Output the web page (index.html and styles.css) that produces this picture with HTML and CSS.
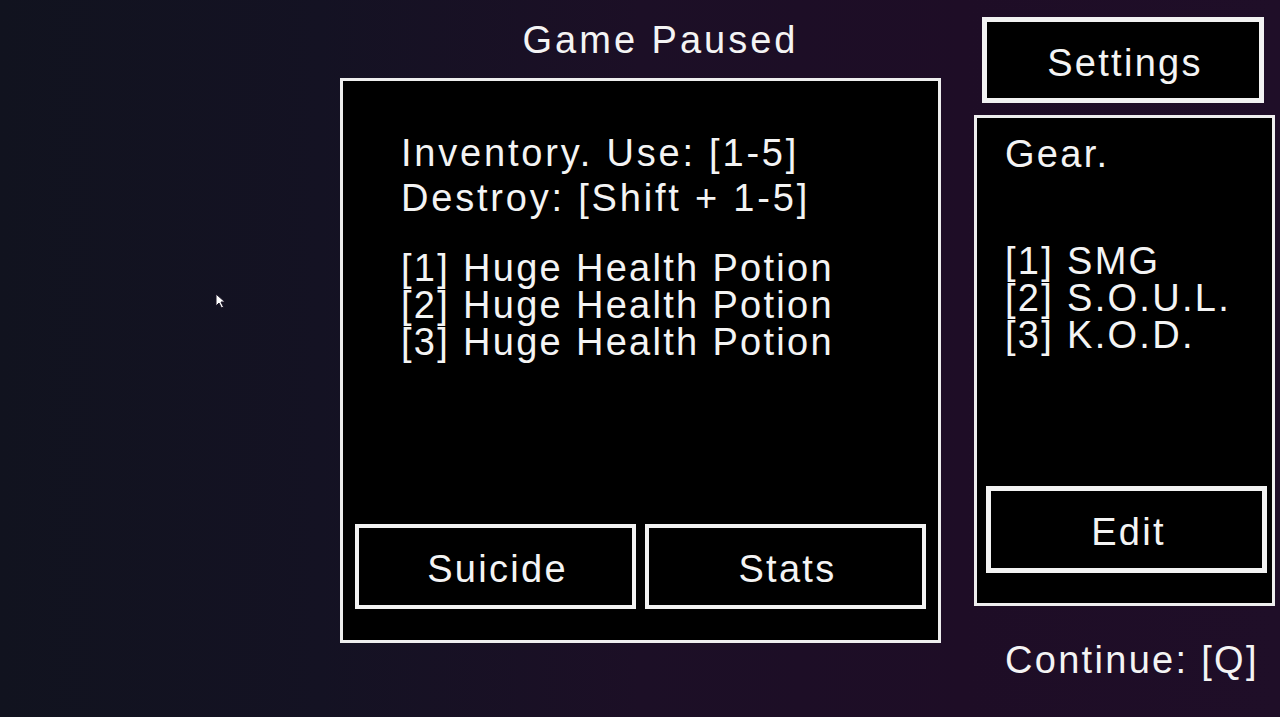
FILE: index.html
```html
<!DOCTYPE html>
<html lang="en">
<head>
    <meta charset="UTF-8">
    <meta name="viewport" content="width=device-width, initial-scale=1.0">
    <title>Game Paused</title>
    <link rel="stylesheet" href="styles.css">
</head>
<body>
    <div class="screen">
        <!-- Pause menu: inventory column -->
        <div class="center-col">
            <h1 class="title">Game Paused</h1>
            <div class="panel inventory">
                <div class="help">
                    <div>Inventory. Use: [1-5]</div>
                    <div>Destroy: [Shift + 1-5]</div>
                </div>
                <ul class="slots">
                    <li>[1] Huge Health Potion</li>
                    <li>[2] Huge Health Potion</li>
                    <li>[3] Huge Health Potion</li>
                </ul>
                <div class="button-row">
                    <button type="button" class="box-btn" id="suicide">Suicide</button>
                    <button type="button" class="box-btn" id="stats">Stats</button>
                </div>
            </div>
        </div>

        <!-- Settings + gear column -->
        <div class="side-col">
            <button type="button" class="box-btn settings" id="settings">Settings</button>
            <div class="panel gear">
                <div class="gear-title">Gear.</div>
                <ul class="slots gear-slots">
                    <li>[1] SMG</li>
                    <li>[2] S.O.U.L.</li>
                    <li>[3] K.O.D.</li>
                </ul>
                <button type="button" class="box-btn edit" id="edit">Edit</button>
            </div>
            <div class="continue">Continue: [Q]</div>
        </div>
    </div>

    <!-- Mouse pointer -->
    <svg class="pointer" width="12" height="16" viewBox="0 0 12 16">
        <path d="M1 1 L1 13 L4 10 L6.5 15 L8.5 14 L6 9 L10 9 Z" fill="#ffffff" stroke="#1a1526" stroke-width="1"/>
    </svg>
</body>
</html>
```

FILE: styles.css
```css
/* Page */
body {
    margin: 0;
    padding: 0;
    width: 1280px;
    height: 717px;
    overflow: hidden;
    position: relative;
    font-family: 'Liberation Sans', Arial, sans-serif;
    font-size: 38px;
    letter-spacing: 2.3px;
    color: #f4f4f4;
    background: linear-gradient(90deg, #11131f 0%, #141223 25%, #1c0f26 50%, #1e0d26 75%, #1f0e28 100%);
}

.screen {
    display: flex;
    padding-left: 340px;
    gap: 33px;
    height: 717px;
}

/* Center column */
.center-col {
    width: 601px;
    display: flex;
    flex-direction: column;
}

.title {
    margin: 0;
    height: 78px;
    box-sizing: border-box;
    padding: 17px 0 0 40px;
    text-align: center;
    font-size: 38px;
    font-weight: normal;
    letter-spacing: 3px;
    line-height: 46px;
}

.panel {
    background-color: #000;
    border: 3px solid #eeeeee;
    box-sizing: border-box;
    display: flex;
    flex-direction: column;
}

.inventory {
    height: 565px;
    padding: 50px 12px 31px 12px;
}

.help {
    padding-left: 46px;
    line-height: 45px;
    letter-spacing: 2.8px;
}

.slots {
    list-style: none;
    margin: 29px 0 0 0;
    padding: 0 0 0 46px;
    line-height: 37px;
}

.button-row {
    margin-top: auto;
    display: flex;
    gap: 9px;
}

/* Boxed buttons */
.box-btn {
    flex: 1;
    height: 85px;
    background-color: #000;
    border: 4px solid #f2f2f2;
    color: #f4f4f4;
    font-family: inherit;
    font-size: 38px;
    letter-spacing: 2.3px;
    padding: 6px 0 0 4px;
    cursor: pointer;
}

/* Right column */
.side-col {
    width: 301px;
    display: flex;
    flex-direction: column;
}

.settings {
    flex: none;
    margin: 17px 0 0 8px;
    width: 282px;
    height: 86px;
    border-width: 5px;
}

.gear {
    margin-top: 12px;
    height: 491px;
    padding: 13px 5px 30px 9px;
}

.gear-title {
    padding-left: 19px;
    line-height: 46px;
}

.gear-slots {
    margin-top: 66px;
    padding-left: 19px;
}

.edit {
    flex: none;
    margin-top: auto;
    width: 100%;
    height: 87px;
    border-width: 5px;
}

.continue {
    margin-top: 31px;
    padding-left: 31px;
    line-height: 46px;
}

/* Mouse pointer */
.pointer {
    position: absolute;
    left: 215px;
    top: 293px;
}
```
